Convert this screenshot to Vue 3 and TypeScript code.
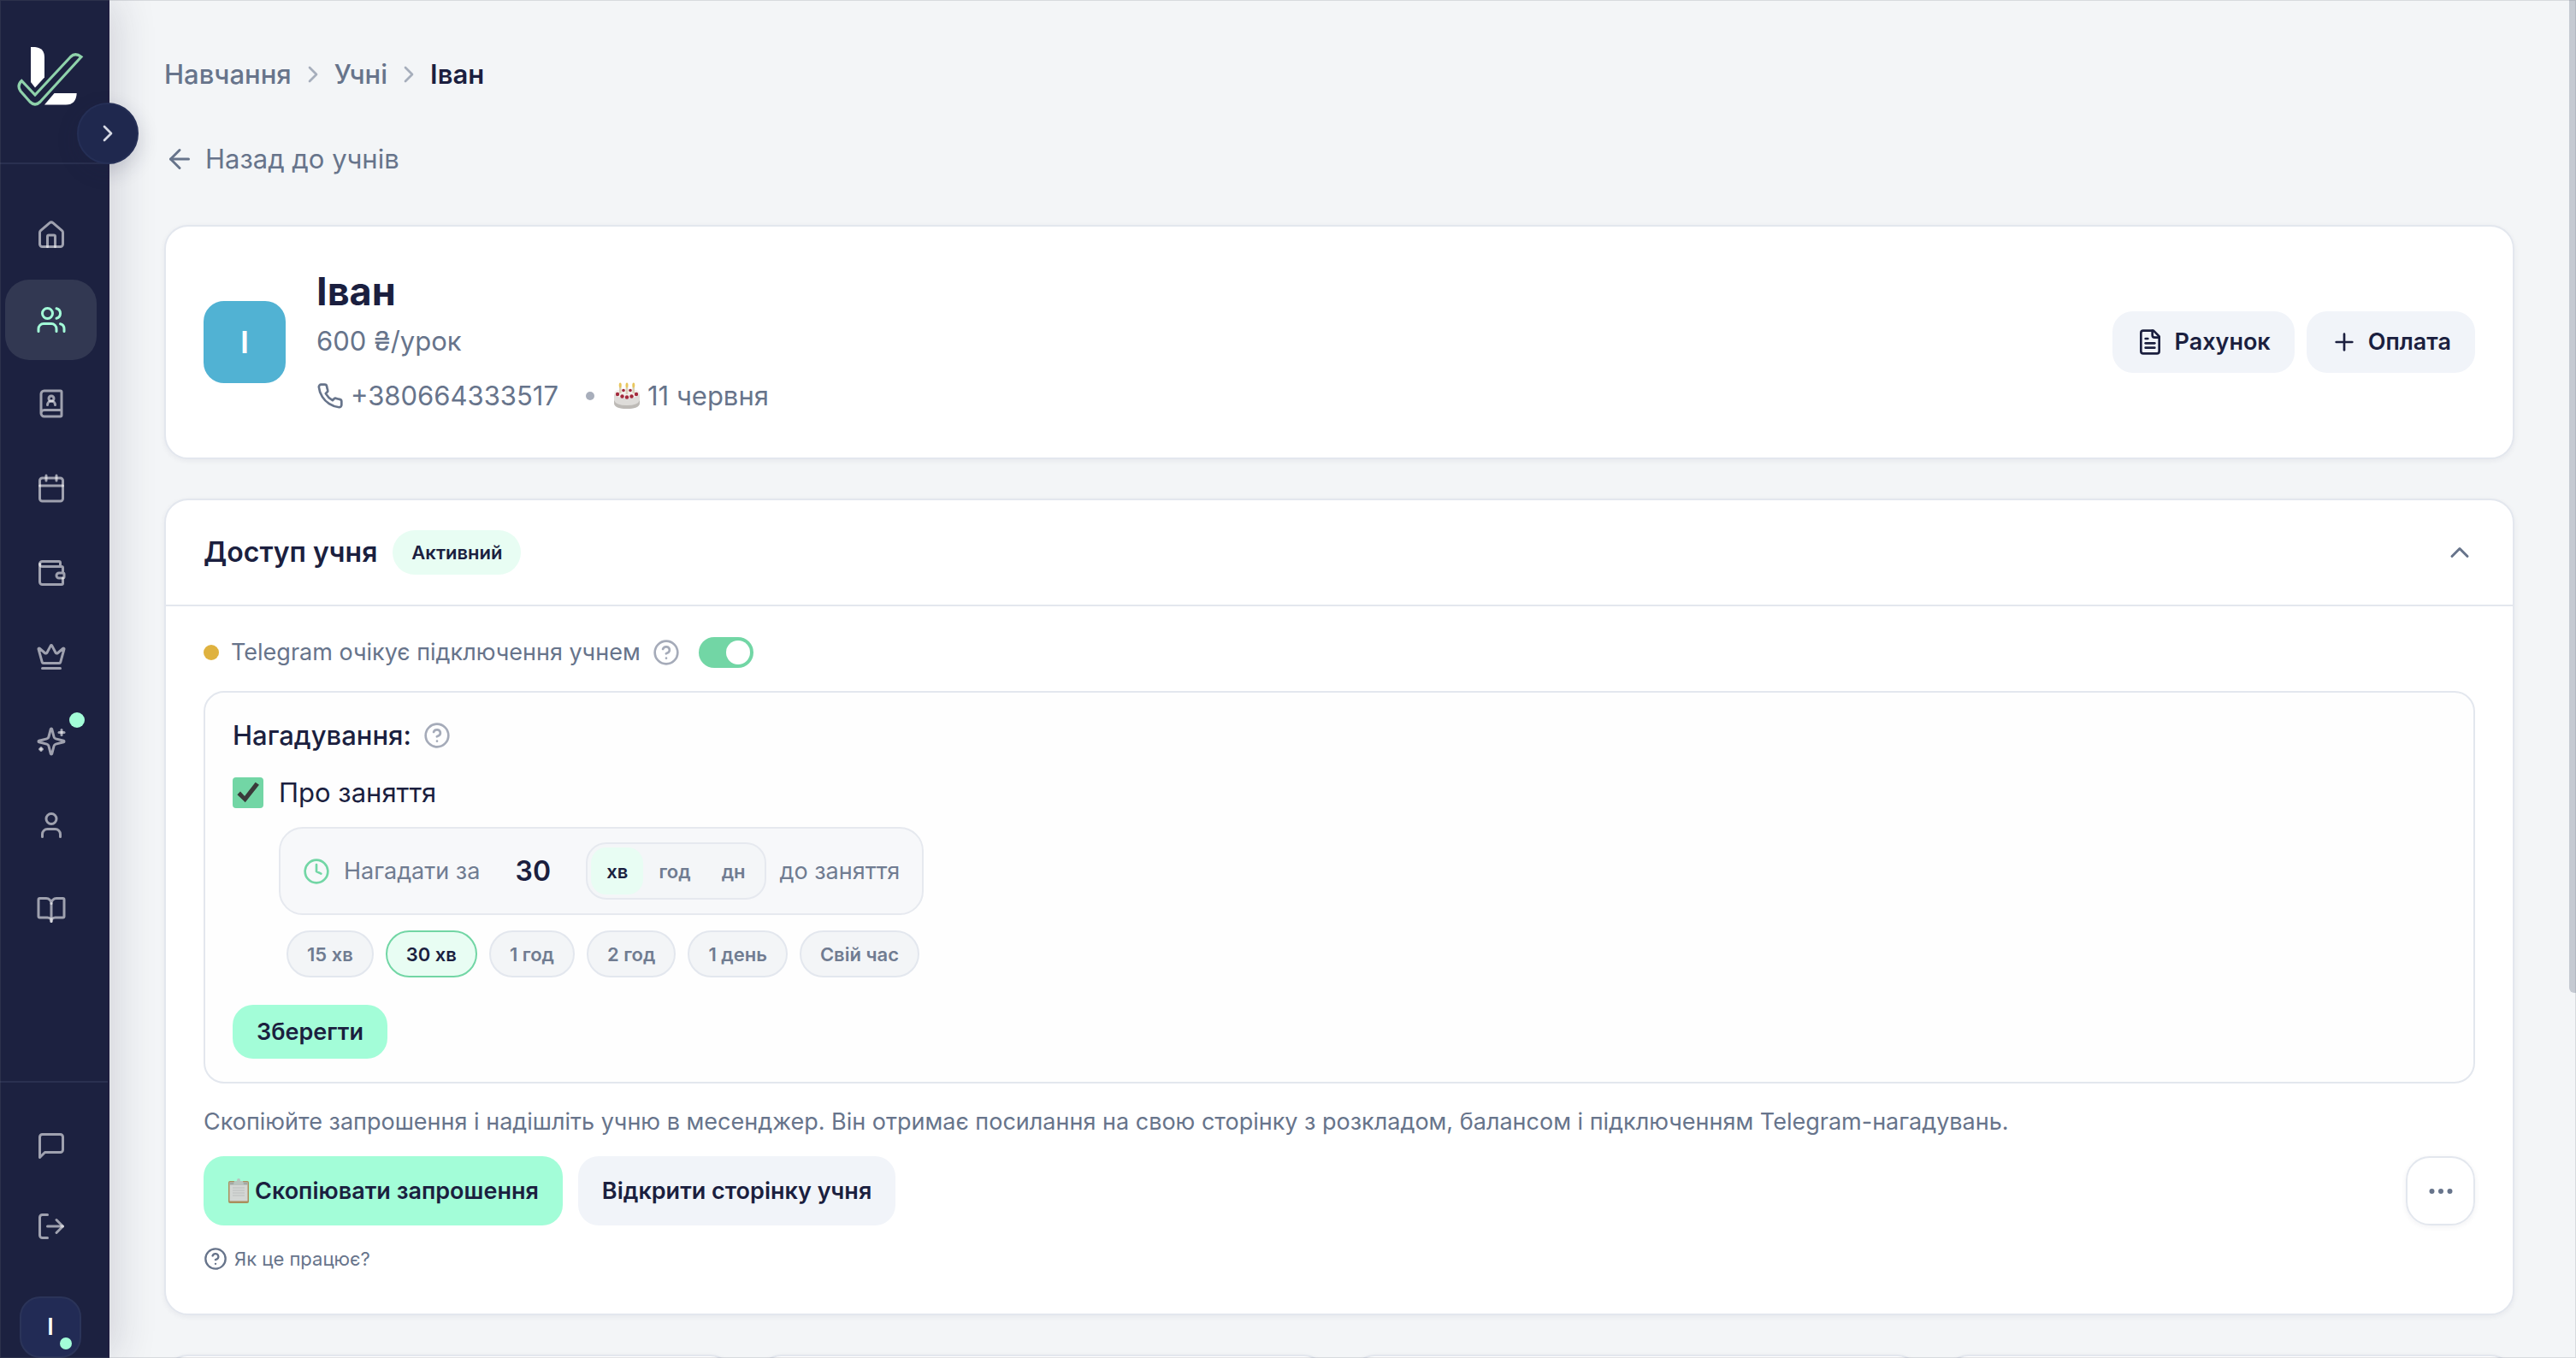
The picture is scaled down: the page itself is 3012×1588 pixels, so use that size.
<script setup lang="ts">
import { h, ref } from 'vue'

interface NavItem {
  icon: string
  label: string
  active?: boolean
  dot?: boolean
}

const icons: Record<string, string[]> = {
  home: [
    'M15 21v-8a1 1 0 0 0-1-1h-4a1 1 0 0 0-1 1v8',
    'M3 10a2 2 0 0 1 .709-1.528l7-5.999a2 2 0 0 1 2.582 0l7 5.999A2 2 0 0 1 21 10v9a2 2 0 0 1-2 2H5a2 2 0 0 1-2-2z',
  ],
  users: [
    'M16 21v-2a4 4 0 0 0-4-4H6a4 4 0 0 0-4 4v2',
    'M5 7a4 4 0 1 0 8 0a4 4 0 1 0-8 0',
    'M22 21v-2a4 4 0 0 0-3-3.87',
    'M16 3.13a4 4 0 0 1 0 7.75',
  ],
  bookUser: [
    'M15 13a3 3 0 1 0-6 0',
    'M4 19.5v-15A2.5 2.5 0 0 1 6.5 2H19a1 1 0 0 1 1 1v18a1 1 0 0 1-1 1H6.5a1 1 0 0 1 0-5H20',
    'M10 8a2 2 0 1 0 4 0a2 2 0 1 0-4 0',
  ],
  calendar: [
    'M8 2v4',
    'M16 2v4',
    'M5 4h14a2 2 0 0 1 2 2v14a2 2 0 0 1-2 2H5a2 2 0 0 1-2-2V6a2 2 0 0 1 2-2z',
    'M3 10h18',
  ],
  wallet: [
    'M19 7V4a1 1 0 0 0-1-1H5a2 2 0 0 0 0 4h15a1 1 0 0 1 1 1v4h-3a2 2 0 0 0 0 4h3a1 1 0 0 0 1-1v-2a1 1 0 0 0-1-1',
    'M3 5v14a2 2 0 0 0 2 2h15a1 1 0 0 0 1-1v-4',
  ],
  crown: [
    'M11.562 3.266a.5.5 0 0 1 .876 0L15.39 8.87a1 1 0 0 0 1.516.294L21.183 5.5a.5.5 0 0 1 .798.519l-2.834 10.246a1 1 0 0 1-.956.734H5.81a1 1 0 0 1-.957-.734L2.02 6.02a.5.5 0 0 1 .798-.519l4.276 3.664a1 1 0 0 0 1.516-.294z',
    'M5 21h14',
  ],
  sparkles: [
    'M9.937 15.5A2 2 0 0 0 8.5 14.063l-6.135-1.582a.5.5 0 0 1 0-.962L8.5 9.936A2 2 0 0 0 9.937 8.5l1.582-6.135a.5.5 0 0 1 .963 0L14.063 8.5A2 2 0 0 0 15.5 9.937l6.135 1.581a.5.5 0 0 1 0 .964L15.5 14.063a2 2 0 0 0-1.437 1.437l-1.582 6.135a.5.5 0 0 1-.963 0z',
    'M20 3v4',
    'M22 5h-4',
    'M4 17v2',
    'M5 18H3',
  ],
  user: ['M19 21v-2a4 4 0 0 0-4-4H9a4 4 0 0 0-4 4v2', 'M8 7a4 4 0 1 0 8 0a4 4 0 1 0-8 0'],
  bookOpen: [
    'M12 7v14',
    'M3 18a1 1 0 0 1-1-1V4a1 1 0 0 1 1-1h5a4 4 0 0 1 4 4 4 4 0 0 1 4-4h5a1 1 0 0 1 1 1v13a1 1 0 0 1-1 1h-6a3 3 0 0 0-3 3 3 3 0 0 0-3-3z',
  ],
  message: ['M21 15a2 2 0 0 1-2 2H7l-4 4V5a2 2 0 0 1 2-2h14a2 2 0 0 1 2 2z'],
  logout: ['M9 21H5a2 2 0 0 1-2-2V5a2 2 0 0 1 2-2h4', 'M16 17l5-5-5-5', 'M21 12H9'],
  file: [
    'M15 2H6a2 2 0 0 0-2 2v16a2 2 0 0 0 2 2h12a2 2 0 0 0 2-2V7Z',
    'M14 2v4a2 2 0 0 0 2 2h4',
    'M10 9H8',
    'M16 13H8',
    'M16 17H8',
  ],
  plus: ['M5 12h14', 'M12 5v14'],
  phone: [
    'M22 16.92v3a2 2 0 0 1-2.18 2 19.79 19.79 0 0 1-8.63-3.07 19.5 19.5 0 0 1-6-6 19.79 19.79 0 0 1-3.07-8.67A2 2 0 0 1 4.11 2h3a2 2 0 0 1 2 1.72 12.84 12.84 0 0 0 .7 2.81 2 2 0 0 1-.45 2.11L8.09 9.91a16 16 0 0 0 6 6l1.27-1.27a2 2 0 0 1 2.11-.45 12.84 12.84 0 0 0 2.81.7A2 2 0 0 1 22 16.92z',
  ],
  help: [
    'M2 12a10 10 0 1 0 20 0a10 10 0 1 0-20 0',
    'M9.09 9a3 3 0 0 1 5.83 1c0 2-3 3-3 3',
    'M12 17h.01',
  ],
  clock: ['M2 12a10 10 0 1 0 20 0a10 10 0 1 0-20 0', 'M12 6v6l4 2'],
  chevronRight: ['M9 18l6-6-6-6'],
  chevronUp: ['M18 15l-6-6-6 6'],
  arrowLeft: ['M12 19l-7-7 7-7', 'M19 12H5'],
  more: [
    'M11 12a1 1 0 1 0 2 0a1 1 0 1 0-2 0',
    'M18 12a1 1 0 1 0 2 0a1 1 0 1 0-2 0',
    'M4 12a1 1 0 1 0 2 0a1 1 0 1 0-2 0',
  ],
}

function Icon(props: { name: string; size?: number; weight?: number }) {
  const size = props.size ?? 32
  return h(
    'svg',
    {
      class: 'icon',
      width: size,
      height: size,
      viewBox: '0 0 24 24',
      fill: 'none',
      stroke: 'currentColor',
      'stroke-width': props.weight ?? 1.75,
      'stroke-linecap': 'round',
      'stroke-linejoin': 'round',
      'aria-hidden': 'true',
    },
    icons[props.name].map((d) => h('path', { d })),
  )
}
Icon.props = ['name', 'size', 'weight']

const nav: NavItem[] = [
  { icon: 'home', label: 'Головна' },
  { icon: 'users', label: 'Учні', active: true },
  { icon: 'bookUser', label: 'Класи' },
  { icon: 'calendar', label: 'Календар' },
  { icon: 'wallet', label: 'Фінанси' },
  { icon: 'crown', label: 'Тарифи' },
  { icon: 'sparkles', label: 'Новинки', dot: true },
  { icon: 'user', label: 'Профіль' },
  { icon: 'bookOpen', label: 'Довідка' },
]

const units = ['хв', 'год', 'дн']
const presets = ['15 хв', '30 хв', '1 год', '2 год', '1 день', 'Свій час']

const unit = ref('хв')
const preset = ref('30 хв')
const amount = ref('30')
const telegramOn = ref(true)
const lessonReminder = ref(true)
</script>

<template>
  <div class="app">
    <aside class="sidebar">
      <div class="brand">
        <svg class="logo" width="80" height="72" viewBox="19 54 80 72" aria-hidden="true">
          <path fill="#fff" d="M36 55h5q11 1 11 12V90.500L41 102.500L36 96z" />
          <path fill="#fff" d="M52 122.500L63.500 109H89.700Q89 122.500 77 122.500z" />
          <path
            fill="none"
            stroke="#8fd2ab"
            stroke-width="3.200"
            stroke-linejoin="miter"
            d="M25.300 94.500Q19.500 100 24 106.500L35 119Q41 125 47 119L95 66.500Q88 61 82.500 66.500L41 111z"
          />
        </svg>
      </div>
      <button class="expand" type="button" aria-label="Розгорнути меню">
        <Icon name="chevronRight" :size="32" :weight="2" />
      </button>

      <nav class="nav" aria-label="Головне меню">
        <a
          v-for="item in nav"
          :key="item.icon"
          href="#"
          class="nav-item"
          :class="{ active: item.active }"
          :aria-label="item.label"
        >
          <Icon :name="item.icon" :size="36" :weight="2" />
          <span v-if="item.dot" class="nav-dot"></span>
        </a>
      </nav>

      <div class="side-foot">
        <button class="nav-item" type="button" aria-label="Повідомлення">
          <Icon name="message" :size="36" :weight="2" />
        </button>
        <button class="nav-item" type="button" aria-label="Вийти">
          <Icon name="logout" :size="36" :weight="2" />
        </button>
        <button class="me" type="button">І<span class="me-dot"></span></button>
      </div>
    </aside>

    <main class="main">
      <nav class="crumbs" aria-label="Шлях">
        <a href="#">Навчання</a>
        <Icon name="chevronRight" :size="32" :weight="2" />
        <a href="#">Учні</a>
        <Icon name="chevronRight" :size="32" :weight="2" />
        <strong>Іван</strong>
      </nav>

      <a class="back" href="#"><Icon name="arrowLeft" :size="36" :weight="2" />Назад до учнів</a>

      <section class="card student">
        <div class="avatar">І</div>
        <div class="info">
          <h1>Іван</h1>
          <p class="price">600 ₴/урок</p>
          <p class="contacts">
            <a class="contact" href="tel:+380664333517">
              <Icon name="phone" :weight="2" />+380664333517
            </a>
            <span class="sep"></span>
            <span class="contact birthday">
              <svg width="32" height="32" viewBox="0 0 32 32" aria-hidden="true">
                <path d="M1 14v10q0 7 15 7t15-7V14z" fill="#dedcd9" />
                <path d="M1 21v3q0 7 15 7t15-7v-3q-2 6-15 6T1 21z" fill="#bdbab6" />
                <ellipse cx="16" cy="13" rx="15" ry="5.500" fill="#f3f0ec" />
                <g fill="#a32a3c">
                  <circle cx="5" cy="14" r="2.200" />
                  <circle cx="10.500" cy="16.500" r="2.200" />
                  <circle cx="16" cy="17.500" r="2.200" />
                  <circle cx="21.500" cy="16.500" r="2.200" />
                  <circle cx="27" cy="14" r="2.200" />
                  <circle cx="12" cy="9.500" r="1.800" />
                  <circle cx="20" cy="9.500" r="1.800" />
                </g>
                <g fill="#d8cfb8">
                  <rect x="7" y="5" width="2.500" height="8" />
                  <rect x="14.700" y="5" width="2.500" height="9" />
                  <rect x="22.500" y="5" width="2.500" height="8" />
                </g>
                <g fill="#e8c65c">
                  <ellipse cx="8.200" cy="3.500" rx="1.500" ry="3" />
                  <ellipse cx="16" cy="3.500" rx="1.500" ry="3" />
                  <ellipse cx="23.800" cy="3.500" rx="1.500" ry="3" />
                </g>
              </svg>
              11 червня
            </span>
          </p>
        </div>
        <div class="actions">
          <button class="btn soft" type="button"><Icon name="file" :weight="2" />Рахунок</button>
          <button class="btn soft" type="button"><Icon name="plus" :weight="2" />Оплата</button>
        </div>
      </section>

      <section class="card access">
        <header class="access-head">
          <h2>Доступ учня</h2>
          <span class="badge">Активний</span>
          <button class="collapse" type="button" aria-label="Згорнути">
            <Icon name="chevronUp" :size="36" :weight="2" />
          </button>
        </header>

        <div class="access-body">
          <div class="telegram">
            <span class="status"></span>
            <label for="tg">Telegram очікує підключення учнем</label>
            <Icon class="hint" name="help" :weight="2" />
            <input id="tg" v-model="telegramOn" class="switch" type="checkbox" role="switch" />
          </div>

          <div class="panel">
            <h3>Нагадування: <Icon class="hint" name="help" :weight="2" /></h3>
            <label class="check">
              <input v-model="lessonReminder" type="checkbox" />
              Про заняття
            </label>
            <div class="reminder">
              <div class="timing">
                <Icon class="clock" name="clock" :weight="2" />
                <label for="amount">Нагадати за</label>
                <input id="amount" v-model="amount" class="amount" type="text" inputmode="numeric" />
                <div class="segments">
                  <button
                    v-for="u in units"
                    :key="u"
                    type="button"
                    :class="{ on: u === unit }"
                    @click="unit = u"
                  >
                    {{ u }}
                  </button>
                </div>
                <span>до заняття</span>
              </div>
              <div class="presets">
                <button
                  v-for="p in presets"
                  :key="p"
                  type="button"
                  :class="{ on: p === preset }"
                  @click="preset = p"
                >
                  {{ p }}
                </button>
              </div>
            </div>
            <button class="btn mint save" type="button">Зберегти</button>
          </div>

          <p class="note">
            Скопіюйте запрошення і надішліть учню в месенджер. Він отримає посилання на свою сторінку з
            розкладом, балансом і підключенням Telegram-нагадувань.
          </p>

          <div class="invite">
            <button class="btn mint" type="button">
              <svg width="26" height="30" viewBox="0 0 26 30" aria-hidden="true">
                <rect x="1" y="3" width="24" height="26" rx="2" fill="#a98f5c" />
                <rect x="2.500" y="4.500" width="21" height="22" fill="#d3d6d4" />
                <path d="M2.500 4.500h21v3h-21z" fill="#a3aaa6" />
                <path d="M8 3h3q0-3 2-3t2 3h3l1 4H7z" fill="#b9c4bf" />
                <path d="M6 11h14M6 14h14M6 17h14M6 20h14" stroke="#bcbfbe" stroke-width="1" />
              </svg>
              Скопіювати запрошення
            </button>
            <button class="btn soft" type="button">Відкрити сторінку учня</button>
            <button class="more" type="button" aria-label="Ще">
              <Icon name="more" :size="36" :weight="2" />
            </button>
          </div>

          <a class="how" href="#"><Icon name="help" :size="28" :weight="2" />Як це працює?</a>
        </div>
      </section>

      <div class="stats">
        <div v-for="n in 4" :key="n" class="card stat"></div>
      </div>
    </main>

    <div class="scroll-thumb"></div>
    <div class="window-edge"></div>
  </div>
</template>

<style>
html,
body {
  background: #f3f5f7;
  overflow: hidden;
}
</style>

<style scoped>
.app,
.app * {
  box-sizing: border-box;
}

.app {
  position: relative;
  display: flex;
  height: 100vh;
  overflow: hidden;
  background: #f3f5f7;
  color: #1b1f3f;
  font-family: Inter, 'Noto Sans', sans-serif;
  font-size: 31px;
  line-height: 48px;
}

h1,
h2,
h3,
p {
  margin: 0;
}

a {
  color: inherit;
  text-decoration: none;
}

button,
input {
  margin: 0;
  font: inherit;
  color: inherit;
}

button {
  padding: 0;
  border: 0;
  background: none;
  white-space: nowrap;
}

svg {
  display: block;
  flex: none;
}

/* Sidebar */
.sidebar {
  position: relative;
  z-index: 1;
  display: flex;
  flex: none;
  flex-direction: column;
  width: 128px;
  height: 100vh;
  background: #1c2140;
  border-right: 2px solid #1f1e40;
  box-shadow: 8px 0 48px rgba(28, 33, 64, 0.16);
}

.brand {
  height: 192px;
  padding: 54px 0 0 19px;
  border-bottom: 2px solid #2a3050;
}

.expand {
  position: absolute;
  top: 120px;
  right: -36px;
  display: flex;
  align-items: center;
  justify-content: center;
  width: 72px;
  height: 72px;
  border: 2px solid #252f56;
  border-radius: 50%;
  background: #1f284e;
  color: #d5d9e4;
  box-shadow: 0 8px 24px rgba(28, 33, 64, 0.2);
}

.nav {
  display: flex;
  flex: 1;
  flex-direction: column;
  justify-content: space-between;
  padding: 36px 13px 153px 6px;
}

.nav-item {
  position: relative;
  display: flex;
  align-items: center;
  justify-content: center;
  width: 107px;
  height: 94px;
  border-radius: 28px;
  color: rgba(255, 255, 255, 0.58);
}

.nav-item.active {
  background: #323852;
  color: #a3fdd8;
}

.nav-dot {
  position: absolute;
  top: 13px;
  right: 14px;
  width: 18px;
  height: 18px;
  border-radius: 50%;
  background: #a3fdd8;
}

.side-foot {
  display: flex;
  flex-direction: column;
  padding: 27px 13px 0 6px;
  border-top: 2px solid #2a3050;
}

.me {
  position: relative;
  width: 72px;
  height: 72px;
  margin: 35px 0 0 17px;
  border: 2px solid #2b3459;
  border-radius: 24px;
  background: #222b55;
  color: #fff;
  font-size: 27px;
  font-weight: 600;
}

.me-dot {
  position: absolute;
  right: 9px;
  bottom: 8px;
  width: 14px;
  height: 14px;
  border-radius: 50%;
  background: #a3fdd8;
}

/* Page header */
.main {
  flex: 1;
  min-width: 0;
  padding: 63px 72px 0 64px;
}

.crumbs {
  display: flex;
  align-items: center;
  gap: 9px;
  color: #67748b;
}

.crumbs a {
  font-weight: 500;
}

.crumbs strong {
  color: #1b1f3f;
  font-weight: 600;
}

.crumbs .icon {
  color: #a6aebc;
}

.back {
  display: flex;
  align-items: center;
  gap: 12px;
  width: fit-content;
  margin: 51px 0 53px;
  color: #67748b;
}

/* Cards */
.card {
  border: 2px solid #e3e7ee;
  border-radius: 28px;
  background: #fff;
  box-shadow: 0 2px 6px rgba(28, 33, 64, 0.06);
}

.student {
  display: flex;
  align-items: center;
  padding: 48px 44px;
}

.avatar {
  display: flex;
  align-items: center;
  justify-content: center;
  width: 96px;
  height: 96px;
  margin-right: 36px;
  border-radius: 24px;
  background: #51b2d3;
  color: #fff;
  font-size: 36px;
  font-weight: 600;
}

.info {
  flex: 1;
  color: #67748b;
}

.info h1 {
  margin-bottom: 6px;
  color: #1b1f3f;
  font-size: 45px;
  font-weight: 700;
  line-height: 56px;
}

.contacts {
  display: flex;
  align-items: center;
  margin-top: 16px;
}

.contact {
  display: flex;
  align-items: center;
  gap: 8px;
}

.sep {
  width: 10px;
  height: 10px;
  margin: 0 22px 0 32px;
  border-radius: 50%;
  background: #a8aebb;
}

.actions {
  display: flex;
  gap: 14px;
}

.btn {
  display: flex;
  align-items: center;
  justify-content: center;
  gap: 12px;
  height: 72px;
  padding: 0 28px;
  border-radius: 24px;
  font-size: 27px;
  font-weight: 600;
}

.soft {
  background: #f1f4f9;
}

.mint {
  background: #a3fdd8;
}

/* Access card */
.access {
  margin-top: 46px;
}

.access-head {
  display: flex;
  align-items: center;
  gap: 18px;
  height: 124px;
  padding: 0 44px;
  border-bottom: 2px solid #e3e7ee;
}

.access-head h2 {
  font-size: 32px;
  font-weight: 600;
}

.badge {
  padding: 6px 22px;
  border-radius: 26px;
  background: #e8fdf3;
  font-size: 22px;
  font-weight: 600;
  line-height: 40px;
}

.collapse {
  margin-left: auto;
  color: #67748b;
}

.access-body {
  padding: 36px 44px 43px;
}

.telegram {
  display: flex;
  align-items: center;
  gap: 14px;
  height: 36px;
  color: #67748b;
  font-size: 27px;
}

.status {
  width: 18px;
  height: 18px;
  border-radius: 50%;
  background: #dfb23f;
}

.hint {
  color: #a5abb9;
}

.switch {
  display: flex;
  align-items: center;
  width: 64px;
  height: 36px;
  margin-left: 8px;
  padding: 4px;
  border-radius: 18px;
  background: #c9ced8;
  appearance: none;
}

.switch::before {
  width: 28px;
  height: 28px;
  border-radius: 50%;
  background: #fff;
  content: '';
}

.switch:checked {
  justify-content: flex-end;
  background: #72d6a5;
}

.panel {
  margin-top: 27px;
  padding: 28px 32px 27px;
  border: 2px solid #e3e7ee;
  border-radius: 24px;
  background: #fefefe;
}

.panel h3 {
  display: flex;
  align-items: center;
  gap: 14px;
  font-size: 31px;
  font-weight: 500;
  line-height: 44px;
}

.check {
  display: flex;
  align-items: center;
  gap: 18px;
  width: fit-content;
  margin: 23px 0 18px;
  line-height: 44px;
}

.check input {
  width: 36px;
  height: 36px;
  border-radius: 4px;
  background: #d9dde5;
  appearance: none;
}

.check input:checked {
  background: #72d6a5;
}

.check input:checked::before {
  display: block;
  width: 36px;
  height: 36px;
  background: #3a3a3a;
  clip-path: polygon(15% 56%, 25% 46%, 39% 61%, 74% 16%, 86% 24%, 41% 81%);
  content: '';
}

.reminder {
  margin-left: 54px;
}

.timing {
  display: flex;
  align-items: center;
  gap: 16px;
  width: fit-content;
  padding: 16px 26px;
  border: 2px solid #e6e9ef;
  border-radius: 28px;
  background: #f7f8fa;
  color: #707c91;
  font-size: 27px;
}

.clock {
  color: #72d6a5;
}

.amount {
  width: 92px;
  padding: 0;
  border: 0;
  background: none;
  color: #1b1f3f;
  font-size: 32px;
  font-weight: 600;
  text-align: center;
}

.segments {
  display: flex;
  padding: 4px;
  border: 2px solid #e6e9ef;
  border-radius: 24px;
  background: #f4f6f8;
}

.segments button {
  height: 55px;
  padding: 0 18px;
  border-radius: 18px;
  font-size: 22px;
  font-weight: 600;
}

.segments .on {
  background: #e8fdf3;
  color: #1b1f3f;
}

.presets {
  display: flex;
  gap: 14px;
  margin: 18px 0 32px;
  padding-left: 9px;
}

.presets button {
  height: 55px;
  padding: 0 22px;
  border: 2px solid #e3e7ee;
  border-radius: 28px;
  background: #f3f5f7;
  color: #707c91;
  font-size: 22px;
  font-weight: 600;
}

.presets .on {
  border-color: #72d6a5;
  background: #e8fdf3;
  color: #1b1f3f;
}

.save {
  height: 63px;
}

.note {
  margin: 23px 0 18px;
  color: #67748b;
  font-size: 27px;
  line-height: 44px;
}

.invite {
  display: flex;
  gap: 18px;
}

.invite .btn {
  height: 81px;
}

.invite .mint {
  gap: 6px;
}

.more {
  display: flex;
  align-items: center;
  justify-content: center;
  width: 81px;
  height: 81px;
  margin-left: auto;
  border: 2px solid #e3e7ee;
  border-radius: 28px;
  color: #67748b;
  box-shadow: 0 2px 6px rgba(28, 33, 64, 0.06);
}

.more .icon {
  fill: currentColor;
}

.how {
  display: flex;
  align-items: center;
  gap: 8px;
  width: fit-content;
  margin-top: 18px;
  color: #67748b;
  font-size: 22px;
  line-height: 42px;
}

.stats {
  display: flex;
  gap: 28px;
  margin-top: 46px;
}

.stat {
  flex: 1;
  height: 200px;
}

/* Window chrome */
.scroll-thumb {
  position: absolute;
  top: 0;
  right: 0;
  width: 8px;
  height: 73.1%;
  border-radius: 0 0 0 6px;
  background: #c5cad2;
}

.window-edge {
  position: absolute;
  inset: 0;
  z-index: 2;
  border: 1px solid rgba(110, 115, 125, 0.2);
  pointer-events: none;
}
</style>
